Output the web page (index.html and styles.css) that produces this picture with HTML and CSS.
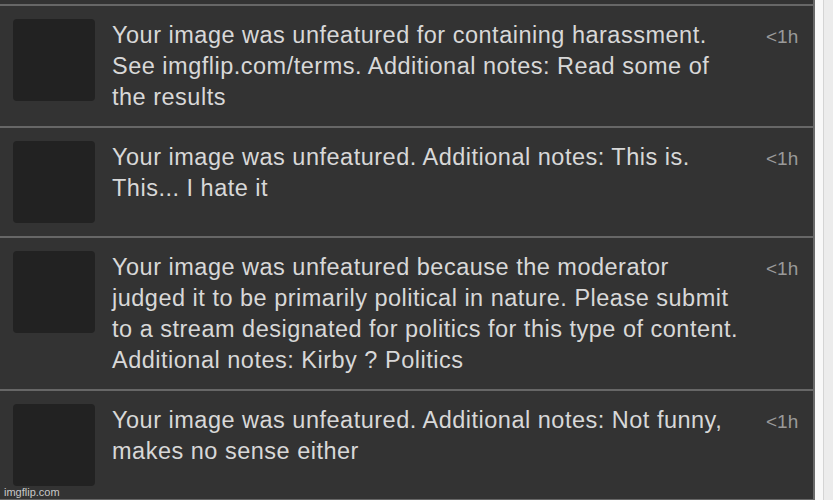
FILE: index.html
```html
<!DOCTYPE html>
<html lang="en">

<head>
    <meta charset="UTF-8">
    <title>Notifications</title>
    <link rel="stylesheet" href="styles.css">
</head>

<body>

    <div class="page">
        <div class="panel">
            <div class="note">
                <div class="thumb"></div>
                <p class="msg">Your image was unfeatured for containing harassment.<br>See imgflip.com/terms. Additional notes: Read some of<br>the results</p>
                <span class="time">&lt;1h</span>
            </div>
            <div class="note">
                <div class="thumb"></div>
                <p class="msg">Your image was unfeatured. Additional notes: This is.<br>This... I hate it</p>
                <span class="time">&lt;1h</span>
            </div>
            <div class="note">
                <div class="thumb"></div>
                <p class="msg">Your image was unfeatured because the moderator<br>judged it to be primarily political in nature. Please submit<br>to a stream designated for politics for this type of content.<br>Additional notes: Kirby ? Politics</p>
                <span class="time">&lt;1h</span>
            </div>
            <div class="note last">
                <div class="thumb"></div>
                <p class="msg">Your image was unfeatured. Additional notes: Not funny,<br>makes no sense either</p>
                <span class="time">&lt;1h</span>
            </div>
        </div>
        <div class="gutter"></div>
        <div class="side"></div>
        <span class="watermark">imgflip.com</span>
    </div>

</body>

</html>
```

FILE: styles.css
```css
body {
    margin: 0;
    background: #ececec;
    font-family: "Liberation Sans", Arial, sans-serif;
}

.page {
    position: relative;
    display: flex;
    height: 500px;
    overflow: hidden;
}

.panel {
    width: 813px;
    padding-top: 4px;
    background: #333;
    border-right: 2px solid #696969;
}

.note {
    display: flex;
    align-items: flex-start;
    padding: 13px 0 13px 13px;
    border-top: 2px solid #676767;
}

.note.last {
    border-bottom: 2px solid #676767;
}

.thumb {
    flex: none;
    width: 82px;
    height: 82px;
    margin-right: 17px;
    background: #222;
    border-radius: 4px;
}

.msg {
    flex: 1;
    margin: 1px 0 0;
    font-size: 23.5px;
    letter-spacing: 0.5px;
    line-height: 31px;
    color: #d8d8d8;
    white-space: nowrap;
}

.time {
    flex: none;
    width: 34px;
    margin: 2px 13px 0 0;
    font-size: 19px;
    line-height: 31px;
    color: #9a9a9a;
}

.gutter {
    width: 8px;
    background: #f8f8f8;
    border-right: 1px solid #d4d4d4;
}

.side {
    flex: 1;
    background: #ececec;
}

.watermark {
    position: absolute;
    left: 4px;
    bottom: 2px;
    font-size: 11px;
    color: #c8c8c8;
}
```
